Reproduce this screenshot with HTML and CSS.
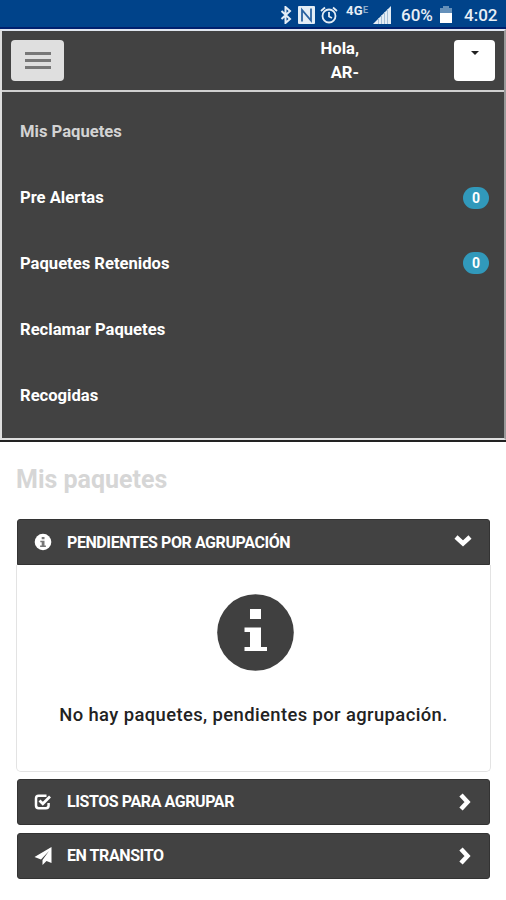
FILE: index.html
```html
<!DOCTYPE html>
<html lang="es">
<head>
    <meta charset="UTF-8">
    <meta name="viewport" content="width=device-width, initial-scale=1.0">
    <title>Mis paquetes</title>
    <link rel="stylesheet" href="styles.css">
</head>
<body>
    <div class="status-bar">
        <svg class="bluetooth" width="12" height="18" viewBox="0 0 12 18"><path d="M1.500 5l8.500 8-4.500 4V1L10 5l-8.500 8" fill="none" stroke="#e4edf5" stroke-width="2"/></svg>
        <svg class="nfc" width="17" height="18" viewBox="0 0 17 18"><rect width="17" height="18" rx="1" fill="#e4edf5"/><path d="M4 15.500V4l9 10.500V2.500" fill="none" stroke="#2a62a0" stroke-width="1.800"/></svg>
        <svg class="alarm" width="18" height="18" viewBox="0 0 18 18"><g fill="none" stroke="#e4edf5" stroke-width="1.800"><circle cx="9" cy="10" r="6.500"/><path d="M9 6v4.500l3 1.500M1 5l4-3.500M17 5l-4-3.500"/></g></svg>
        <span class="network">4G<small>E</small></span>
        <svg class="signal" width="18" height="18" viewBox="0 0 18 18"><path d="M0 18L18 0v18z" fill="#e4edf5"/><path d="M5.500 12v6M8.500 9v9M11.500 6v12M14.500 3v15" stroke="#a5bfd8"/></svg>
        <span class="percent">60%</span>
        <svg class="battery" width="12" height="17" viewBox="0 0 12 17"><path d="M3 0h6v2h3v5H0V2h3z" fill="#6590ba"/><path d="M0 7h12v10H0z" fill="#fff"/></svg>
        <span class="clock">4:02</span>
    </div>

    <div class="navbar">
        <div class="nav-header">
            <button class="menu-toggle">
                <span class="icon-bar"></span>
                <span class="icon-bar"></span>
                <span class="icon-bar"></span>
            </button>
            <div class="user">Hola,<br>AR-</div>
            <button class="user-toggle"><span class="caret"></span></button>
        </div>
        <ul class="menu">
            <li class="active">Mis Paquetes</li>
            <li>Pre Alertas<span class="badge">0</span></li>
            <li>Paquetes Retenidos<span class="badge">0</span></li>
            <li>Reclamar Paquetes</li>
            <li>Recogidas</li>
        </ul>
    </div>

    <div class="content">
        <h1>Mis paquetes</h1>

        <div class="panel open">
            <div class="panel-heading">
                <svg class="icon" width="18" height="18" viewBox="0 0 18 18"><circle cx="9" cy="9" r="8.300" fill="#fff"/><path d="M7.700 4h2.800v2.200H7.700zM6.300 7.700h4.200v4.800h1.400V14H6.100v-1.500h1.600V9.200H6.300z" fill="#777"/></svg>
                <span class="title">PENDIENTES POR AGRUPACIÓN</span>
                <svg class="arrow" width="20" height="18" viewBox="0 0 20 18"><path d="M3 4l7 6.500L17 4" fill="none" stroke="#fff" stroke-width="4.500"/></svg>
            </div>
            <div class="panel-body">
                <svg class="info" width="77" height="77" viewBox="0 0 77 77"><circle cx="38.500" cy="38.500" r="38.300" fill="#404040"/><path d="M33 15h11v10H33zM27.500 33.500H44V53h6v4H27.500v-4H33V38h-5.500z" fill="#fff"/></svg>
                <p>No hay paquetes, pendientes por agrupación.</p>
            </div>
        </div>

        <div class="panel">
            <div class="panel-heading">
                <svg class="icon" width="18" height="18" viewBox="0 0 18 18"><path d="M12.500 2.700H4.700q-2.700 0-2.700 2.700v7.200q0 2.700 2.700 2.700h7.200q2.700 0 2.700-2.700V10" fill="none" stroke="#fff" stroke-width="2.500"/><path d="M5.500 7.500l3.300 3.300L16 3.500" fill="none" stroke="#fff" stroke-width="2.700"/></svg>
                <span class="title">LISTOS PARA AGRUPAR</span>
                <svg class="arrow" width="20" height="20" viewBox="0 0 20 20"><path d="M8 3l6.500 7L8 17" fill="none" stroke="#fff" stroke-width="4.500"/></svg>
            </div>
        </div>

        <div class="panel">
            <div class="panel-heading">
                <svg class="icon" width="18" height="18" viewBox="0 0 18 18"><path d="M17.500 0v16l-5-2-4 4v-5l6.500-9-8 8.500-6.500-2.500z" fill="#fff"/></svg>
                <span class="title">EN TRANSITO</span>
                <svg class="arrow" width="20" height="20" viewBox="0 0 20 20"><path d="M8 3l6.500 7L8 17" fill="none" stroke="#fff" stroke-width="4.500"/></svg>
            </div>
        </div>
    </div>
</body>
</html>
```
FILE: styles.css
```css
* { box-sizing: border-box; }
body {
    margin: 0;
    background: #fff;
    color: #222;
    font-family: Roboto, Arial, sans-serif;
    font-size: 16px;
    font-weight: bold;
}
svg { display: block; flex-shrink: 0; }
.status-bar {
    height: 29px;
    padding: 2px 9px 0 0;
    display: flex;
    align-items: center;
    justify-content: flex-end;
    background: #00438a;
    border-bottom: 2px solid #00206e;
    color: #e8eff6;
    font-size: 17px;
    font-weight: 500;
}
.bluetooth { margin-right: 6px; }
.nfc { margin-right: 5px; }
.alarm { margin-right: 8px; }
.network {
    font-size: 13px;
    font-weight: bold;
    width: 24px;
    margin-right: 3px;
    padding-bottom: 8px;
    white-space: nowrap;
    letter-spacing: 0.3px;
}
.network small { font-size: 9px; opacity: 0.6; vertical-align: 2px; }
.signal { margin-right: 10px; }
.percent { width: 32px; margin-right: 7px; }
.battery { margin-right: 12px; }
.clock { width: 33px; }

.navbar {
    background: #424242;
    border: 2px solid #dedede;
    border-top-color: #e0e6f0;
    border-right-color: #999;
}
.nav-header {
    height: 61px;
    display: flex;
    align-items: center;
    padding: 0 9px;
    border-bottom: 2px solid #d0d0d0;
}
.menu-toggle, .user-toggle {
    height: 41px;
    padding: 0;
    border: none;
    border-radius: 4px;
}
.menu-toggle {
    width: 53px;
    background: #dfdfdf;
    display: flex;
    flex-direction: column;
    justify-content: center;
    align-items: center;
    gap: 4px;
}
.icon-bar {
    width: 26px;
    height: 3px;
    background: #777;
}
.user {
    margin-left: auto;
    margin-right: 95px;
    color: #fff;
    font-size: 16.6px;
    line-height: 24px;
    text-align: right;
}
.user-toggle {
    width: 41px;
    background: #fff;
    display: flex;
    justify-content: center;
    padding-top: 11px;
}
.caret {
    width: 8px;
    height: 4px;
    border-top: 4px solid #222;
    border-left: 4px solid transparent;
    border-right: 4px solid transparent;
}
.menu {
    list-style: none;
    margin: 0;
    padding: 7px 15px 10px 18px;
    color: #fff;
    font-size: 16.6px;
}
.menu li {
    height: 65.8px;
    display: flex;
    justify-content: space-between;
    align-items: center;
}
.menu .active { color: #d3d3d3; }
.badge {
    width: 26px;
    height: 22px;
    line-height: 22px;
    border-radius: 11px;
    background: #3199bb;
    font-size: 14px;
    text-align: center;
}

.content {
    border-top: 2px solid #222;
    padding: 21px 15px 0 16px;
}
h1 {
    margin: 0 0 22px;
    height: 34px;
    line-height: 34px;
    font-size: 25px;
    color: #d6d6d6;
}
.panel { margin-bottom: 8px; }
.panel-heading {
    height: 46px;
    margin: 0 1px;
    padding: 0 16px;
    display: flex;
    align-items: center;
    background: #424242;
    border: 1px solid #333;
    border-radius: 3px;
    color: #fff;
}
.title { letter-spacing: -0.41px; }
.icon { margin-right: 15px; }
.arrow { margin-left: auto; }
.open { margin-bottom: 7px; }
.open .panel-heading { border-radius: 3px 3px 0 0; }
.open .title { padding-top: 2px; }
.panel-body {
    height: 207px;
    padding-top: 29px;
    display: flex;
    flex-direction: column;
    align-items: center;
    border: 1px solid #e3e3e3;
    border-top: none;
    border-radius: 0 0 5px 5px;
}
.info { margin-left: 4px; }
.panel-body p {
    margin: 32px 0 0;
    font-size: 18.4px;
    font-weight: 500;
    line-height: 24px;
    letter-spacing: 0.4px;
    white-space: nowrap;
}
```
